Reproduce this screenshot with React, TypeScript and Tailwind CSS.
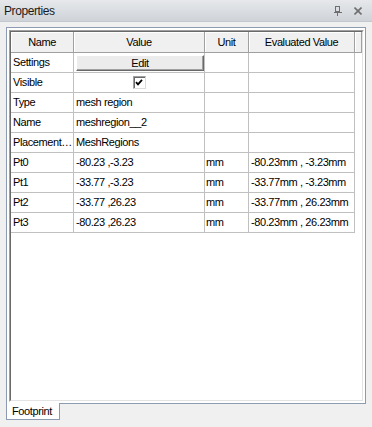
const font = { fontFamily: '"Liberation Sans", Arial, sans-serif' };

const rows = [
  { name: 'Settings', value: 'edit', unit: '', evaluated: '' },
  { name: 'Visible', value: 'check', unit: '', evaluated: '' },
  { name: 'Type', value: 'mesh region', unit: '', evaluated: '' },
  { name: 'Name', value: 'meshregion__2', unit: '', evaluated: '' },
  { name: 'Placement…', value: 'MeshRegions', unit: '', evaluated: '' },
  { name: 'Pt0', value: '-80.23 ,-3.23', unit: 'mm', evaluated: '-80.23mm , -3.23mm' },
  { name: 'Pt1', value: '-33.77 ,-3.23', unit: 'mm', evaluated: '-33.77mm , -3.23mm' },
  { name: 'Pt2', value: '-33.77 ,26.23', unit: 'mm', evaluated: '-33.77mm , 26.23mm' },
  { name: 'Pt3', value: '-80.23 ,26.23', unit: 'mm', evaluated: '-80.23mm , 26.23mm' },
];

function PinIcon() {
  return (
    <svg width="8" height="10" viewBox="0 0 8 10" fill="none" stroke="#6f6f6f" strokeWidth="1" shapeRendering="crispEdges">
      <rect x="1.5" y="0.5" width="4" height="5" />
      <line x1="0" y1="6.5" x2="8" y2="6.5" />
      <line x1="3.5" y1="7" x2="3.5" y2="10" />
    </svg>
  );
}

function CloseIcon() {
  return (
    <svg width="8" height="8" viewBox="0 0 8 8" stroke="#6f6f6f" strokeWidth="1.6">
      <line x1="0.5" y1="0.5" x2="7.5" y2="7.5" />
      <line x1="7.5" y1="0.5" x2="0.5" y2="7.5" />
    </svg>
  );
}

function HeaderCell({ label, w }: { label: string; w: string }) {
  return (
    <div
      className={`${w} h-full flex items-center justify-center bg-[#f0f0f0] border-r border-b border-[#a0a0a0] shadow-[inset_1px_1px_0_#ffffff] text-[11px] tracking-[-0.4px] text-black`}
    >
      {label}
    </div>
  );
}

function ValueCell({ value }: { value: string }) {
  if (value === 'edit') {
    return (
      <div className="w-[131px] h-full border-r border-b border-[#c0c0c0] pl-[2px] pt-[2px] pb-[1px]">
        <div className="w-[128px] h-[16px] flex items-center justify-center bg-[#ececec] border border-t-white border-l-white border-r-[#696969] border-b-[#696969] shadow-[inset_-1px_-1px_0_#a0a0a0] text-[11px] tracking-[-0.4px]">
          Edit
        </div>
      </div>
    );
  }
  if (value === 'check') {
    return (
      <div className="w-[131px] h-full border-r border-b border-[#c0c0c0] flex items-center justify-center">
        <div className="w-[13px] h-[13px] bg-white border border-t-[#a0a0a0] border-l-[#a0a0a0] border-r-[#dcdcdc] border-b-[#dcdcdc] shadow-[inset_1px_1px_0_#696969] flex items-center justify-center">
          <svg width="8" height="7" viewBox="0 0 8 7" fill="none" stroke="#000" strokeWidth="1.8">
            <path d="M1 3.2 L3 5.4 L7 0.8" />
          </svg>
        </div>
      </div>
    );
  }
  return (
    <div className="w-[131px] h-full border-r border-b border-[#c0c0c0] pl-[2px] flex items-center whitespace-nowrap overflow-hidden">
      {value}
    </div>
  );
}

export default function App() {
  return (
    <div className="w-[372px] h-[427px] bg-[#f0f0f0] flex flex-col overflow-hidden text-black" style={font}>
      {/* Title bar */}
      <div className="h-[22px] shrink-0 flex items-center px-[4px] bg-gradient-to-b from-[#e6e8eb] to-[#cfd3d8] border-b border-[#c3c8cf]">
        <span className="text-[12px] tracking-[-0.4px] text-[#1a1a1a]">Properties</span>
        <div className="ml-auto flex items-center gap-[12px] pr-[6px]">
          <PinIcon />
          <CloseIcon />
        </div>
      </div>

      {/* Tab page frame */}
      <div className="mt-[5px] ml-[6px] w-[360px] h-[377px] shrink-0 border border-[#8d9bb2] bg-white pl-[2px] pr-[1px] pt-[2px] pb-[1px]">
        <div className="w-full h-full border border-t-[#a0a0a0] border-l-[#a0a0a0] border-r-white border-b-white">
          <div className="w-full h-full border border-t-[#696969] border-l-[#696969] border-r-[#e3e3e3] border-b-[#e3e3e3] bg-white">
            {/* Header */}
            <div className="flex h-[21px]">
              <HeaderCell label="Name" w="w-[63px]" />
              <HeaderCell label="Value" w="w-[131px]" />
              <HeaderCell label="Unit" w="w-[44px]" />
              <HeaderCell label="Evaluated Value" w="w-[106px]" />
              <HeaderCell label="" w="w-[7px]" />
            </div>
            {/* Rows */}
            {rows.map((r) => (
              <div key={r.name} className="flex h-[20px] text-[11px] tracking-[-0.4px]">
                <div className="w-[63px] h-full border-r border-b border-[#c0c0c0] pl-[2px] flex items-center whitespace-nowrap overflow-hidden">
                  {r.name}
                </div>
                <ValueCell value={r.value} />
                <div className="w-[44px] h-full border-r border-b border-[#c0c0c0] pl-[1px] flex items-center">
                  {r.unit}
                </div>
                <div className="w-[106px] h-full border-r border-b border-[#c0c0c0] pl-[2px] flex items-center whitespace-nowrap">
                  {r.evaluated}
                </div>
              </div>
            ))}
          </div>
        </div>
      </div>

      {/* Tab */}
      <div className="ml-[6px] -mt-[1px] w-[54px] h-[17px] shrink-0 relative z-10 bg-white border border-t-0 border-[#8d9bb2] flex items-center pl-[5px] text-[11px] tracking-[-0.4px]">
        Footprint
      </div>
    </div>
  );
}
